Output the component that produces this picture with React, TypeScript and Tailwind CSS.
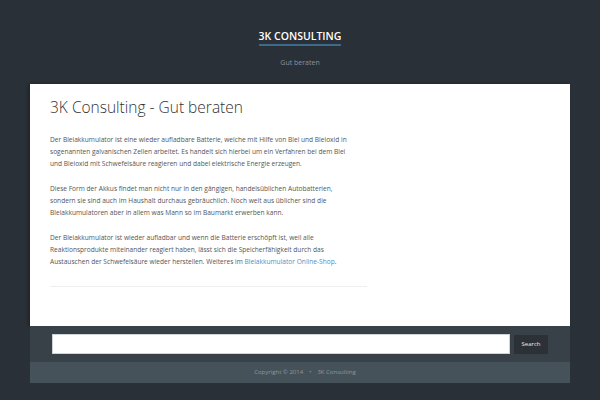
export default function App() {
    return (
        <div className="min-h-[400px] bg-[#2a3037] flex flex-col" style={{ fontFamily: '"Open Sans", Lato, sans-serif' }}>
            {/* Header */}
            <header className="h-[84px] flex flex-col items-center pt-[29px]">
                <div className="border-b-2 border-[#3e6a89] pb-[1px] text-[10.5px] leading-[14px] font-semibold text-white">
                    3K CONSULTING
                </div>
                <div className="mt-[12px] text-[7px] text-[#8a9299]">Gut beraten</div>
            </header>

            {/* Main card */}
            <main className="mx-[30px] bg-white h-[242px] px-[20px] pt-[12px] shadow-[-2px_0_3px_rgba(0,0,0,0.25)]">
                <div className="w-[317px]">
                    <h1 className="text-[15.5px] leading-[22px] font-light text-[#333]">3K Consulting - Gut beraten</h1>
                    <div className="mt-[16px] text-[6.6px] leading-[12px] text-[#555] flex flex-col gap-[13px] whitespace-nowrap">
                        <p>
                            Der Bleiakkumulator ist eine wieder aufladbare Batterie, welche mit Hilfe von Blei und Bleioxid in<br />
                            sogenannten galvanischen Zellen arbeitet. Es handelt sich hierbei um ein Verfahren bei dem Blei<br />
                            und Bleioxid mit Schwefelsäure reagieren und dabei elektrische Energie erzeugen.
                        </p>
                        <p>
                            Diese Form der Akkus findet man nicht nur in den gängigen, handelsüblichen Autobatterien,<br />
                            sondern sie sind auch im Haushalt durchaus gebräuchlich. Noch weit aus üblicher sind die<br />
                            Bleiakkumulatoren aber in allem was Mann so im Baumarkt erwerben kann.
                        </p>
                        <p>
                            Der Bleiakkumulator ist wieder aufladbar und wenn die Batterie erschöpft ist, weil alle<br />
                            Reaktionsprodukte miteinander reagiert haben, lässt sich die Speicherfähigkeit durch das<br />
                            Austauschen der Schwefelsäure wieder herstellen. Weiteres im{' '}
                            <a className="text-[#4f8fbf]">Bleiakkumulator Online-Shop</a>.
                        </p>
                    </div>
                    <div className="mt-[18px] border-t border-[#eeeeee]"></div>
                </div>
            </main>

            {/* Search */}
            <div className="mx-[30px] h-[36px] bg-[#384148] flex items-center gap-[4px] pl-[22px] pr-[22px]">
                <input className="flex-1 h-[20px] bg-white border border-[#cfd3d6] outline-none" />
                <button className="h-[19px] w-[34px] bg-[#2c3137] text-[#e8eaec] text-[6px]">Search</button>
            </div>

            {/* Footer */}
            <footer className="mx-[30px] h-[21px] bg-[#46525a] flex items-center justify-center pl-[10px] text-[6px] text-[#8d979e]">
                Copyright © 2014 <span className="mx-[6px]">•</span> 3K Consulting
            </footer>
        </div>
    );
}
